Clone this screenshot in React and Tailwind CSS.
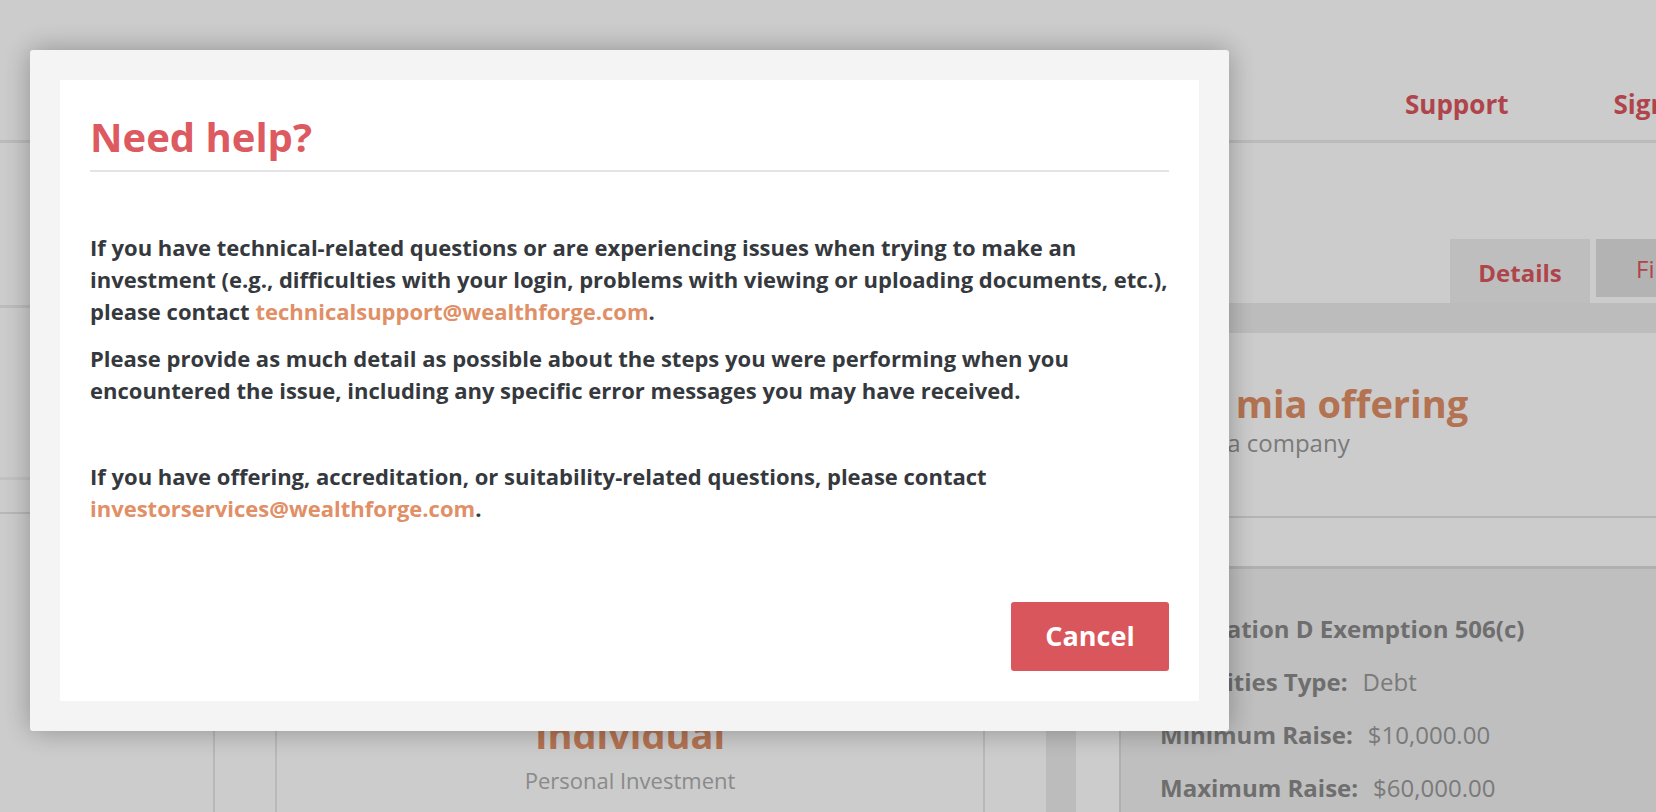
import { useState } from 'react'

const font = { fontFamily: '"Open Sans", "Liberation Sans", sans-serif' }

function Header() {
  return (
    <header className="h-[143px] border-b-[3px] border-[#eaeaea] bg-white">
      <nav className="flex gap-[105px] whitespace-nowrap pl-[1405px] pt-[86px]">
        <a className="text-[26px] font-bold leading-[36px] text-[#dc565e]">Support</a>
        <a className="text-[26px] font-bold leading-[36px] text-[#dc565e]">Sign In</a>
      </nav>
    </header>
  )
}

function InvestorTypes() {
  return (
    <section className="flex w-[1046px] shrink-0 flex-col">
      {/* rows hidden behind the dialog */}
      <div className="h-[162px] shrink-0" />
      <div className="h-[3px] shrink-0 bg-[#ececec]" />
      <div className="h-[169px] shrink-0" />
      <div className="h-[3px] shrink-0 bg-[#f2f2f2]" />
      <div className="h-[32px] shrink-0" />
      <div className="h-[2px] shrink-0 bg-[#e6e6e6]" />
      <div className="flex min-h-0 flex-1 overflow-hidden">
        <div className="w-[213px]" />
        <div className="w-[62px] border-l-2 border-[#e6e6e6]" />
        <div className="flex w-[710px] flex-col items-center border-x-2 border-[#e6e6e6] pt-[197px]">
          <h3 className="text-[38px] font-bold leading-[46px] text-[#e08f66]">Individual</h3>
          <p className="mt-[8px] text-[22px] leading-[30px] text-[#adadad]">Personal Investment</p>
        </div>
      </div>
    </section>
  )
}

function OfferingDetails() {
  const rows = [
    ['Securities Type:', 'Debt'],
    ['Minimum Raise:', '$10,000.00'],
    ['Maximum Raise:', '$60,000.00'],
  ]

  return (
    <section className="flex w-[700px] shrink-0 flex-col">
      {/* Tabs */}
      <div className="flex shrink-0 items-start gap-[6px] pl-[374px] pt-[96px]">
        <div className="h-[64px] w-[140px] bg-[#eeeeee] pt-[18px] text-center text-[24px] font-bold leading-[32px] text-[#dc565e]">
          Details
        </div>
        <div className="h-[58px] bg-[#e0e0e0] px-[40px] pt-[14px] text-[24px] leading-[32px] text-[#dc565e]">
          Files
        </div>
      </div>
      <div className="h-[30px] shrink-0 bg-[#ececec]" />

      {/* Offering title */}
      <div className="h-[185px] shrink-0 border-b-2 border-[#e2e2e2] pl-[70px] pt-[47px]">
        <h2 className="whitespace-nowrap text-[38px] font-bold leading-[46px] text-[#e08f66]">Test mia offering</h2>
        <p className="mt-[1px] whitespace-nowrap text-[24px] leading-[32px] text-[#999999]">Test mia company</p>
      </div>
      <div className="h-[48px] shrink-0" />

      {/* Terms panel */}
      <div className="ml-[43px] min-h-0 flex-1 overflow-hidden border-l-2 border-t-[3px] border-[#dcdcdc] bg-[#efefef] pl-[39px] pt-[33px]">
        <p className="whitespace-nowrap text-[24px] font-bold leading-[53px] text-[#8a8a8a]">Regulation D Exemption 506(c)</p>
        {rows.map(([label, value]) => (
          <p key={label} className="whitespace-nowrap text-[24px] leading-[53px] text-[#999999]">
            <span className="font-bold text-[#8a8a8a]">{label}</span>
            <span className="ml-[15px]">{value}</span>
          </p>
        ))}
      </div>
    </section>
  )
}

function HelpDialog({ onClose }) {
  return (
    <div className="fixed left-[30px] top-[50px] z-20 w-[1199px] rounded-[3px] bg-[#f4f4f4] p-[30px] shadow-[0_0_28px_rgba(0,0,0,0.3)]">
      <div className="flex flex-col bg-white px-[30px] pb-[30px] pt-[30px]">
        <h2 className="mt-[5px] border-b-2 border-[#e4e4e4] pb-[11px] text-[40px] font-bold leading-[44px] text-[#dc5a60]">
          Need help?
        </h2>
        <div className="text-[22px] font-bold leading-[32px] text-[#35393d]">
          <p className="mt-[59px]">
            If you have technical-related questions or are experiencing issues when trying to make an investment (e.g.,
            difficulties with your login, problems with viewing or uploading documents, etc.), please contact{' '}
            <a className="text-[#e08f66]">technicalsupport@wealthforge.com</a>.
          </p>
          <p className="mt-[15px]">
            Please provide as much detail as possible about the steps you were performing when you encountered the
            issue, including any specific error messages you may have received.
          </p>
          <p className="mt-[54px]">
            If you have offering, accreditation, or suitability-related questions, please contact{' '}
            <a className="text-[#e08f66]">investorservices@wealthforge.com</a>.
          </p>
        </div>
        <button
          onClick={onClose}
          className="mt-[78px] h-[69px] w-[158px] self-end rounded-[3px] bg-[#d9575c] text-[27px] font-bold text-white"
        >
          Cancel
        </button>
      </div>
    </div>
  )
}

export default function App() {
  const [open, setOpen] = useState(true)

  return (
    <div className="relative h-[812px] w-[1656px] overflow-hidden bg-white" style={font}>
      <Header />
      <main className="flex h-[669px]">
        <InvestorTypes />
        <div className="w-[30px] shrink-0 bg-[#ebebeb]" />
        <OfferingDetails />
      </main>

      {open && (
        <>
          <div className="fixed inset-0 z-10 bg-black/20" />
          <HelpDialog onClose={() => setOpen(false)} />
        </>
      )}
    </div>
  )
}
